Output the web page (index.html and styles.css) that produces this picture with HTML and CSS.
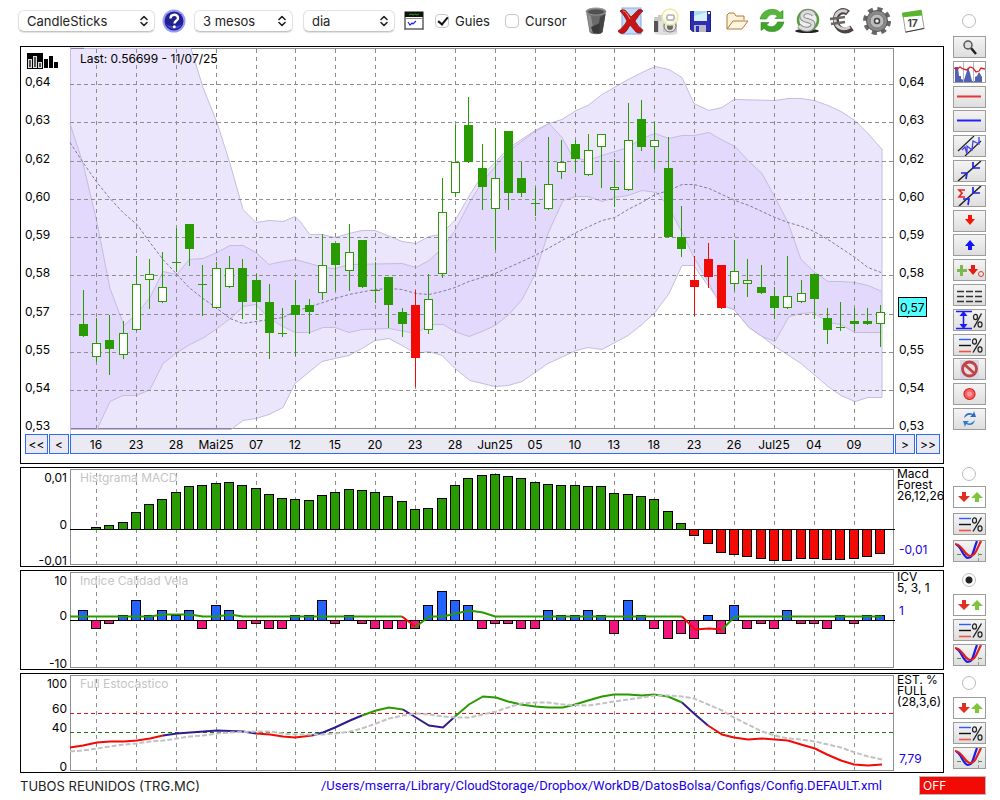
FILE: index.html
```
<!DOCTYPE html>
<html lang="ca">
<head>
    <meta charset="UTF-8">
    <meta name="viewport" content="width=device-width, initial-scale=1.0">
    <title>TUBOS REUNIDOS (TRG.MC)</title>
    <link rel="stylesheet" href="styles.css">
</head>
<body>
    <!-- icons used more than once -->
    <svg class="symbols" width="0" height="0">
        <symbol id="chevrons" viewBox="0 0 8 12">
            <path d="M1 4.5 L4 1.5 L7 4.5 M1 7.5 L4 10.5 L7 7.5" fill="none" stroke="#222" stroke-width="1.6" stroke-linecap="round" stroke-linejoin="round"/>
        </symbol>
        <symbol id="updown" viewBox="0 0 31 20">
            <path d="M8 5h4v4h4l-6 6l-6 -6h4z" fill="#e03024"/>
            <path d="M21 15h4v-4h4l-6 -6l-6 6h4z" fill="#7cc63c"/>
        </symbol>
        <symbol id="percent" viewBox="0 0 31 20">
            <path d="M5 4.5h12" stroke="#2c5cff" stroke-width="1.4"/>
            <path d="M5 10.5h12" stroke="#111" stroke-width="1.4"/>
            <path d="M5 16.5h12" stroke="#f25544" stroke-width="1.6"/>
            <path d="M19 17.5L27.500 3.500" stroke="#222" stroke-width="1.4"/>
            <ellipse cx="20.5" cy="6.5" rx="2" ry="2.6" fill="none" stroke="#222" stroke-width="1.2"/>
            <ellipse cx="26" cy="14.5" rx="2" ry="2.6" fill="none" stroke="#222" stroke-width="1.2"/>
        </symbol>
        <symbol id="cross" viewBox="0 0 31 20">
            <path d="M3 13.5h27" stroke="#4d9440" stroke-dasharray="4 3"/>
            <path d="M24.500 12v8" stroke="#999" stroke-dasharray="3 2"/>
            <path d="M2 4C7 4 9 17 14 17S19 10 23 0" fill="none" stroke="#1a1aee" stroke-width="2.2"/>
            <path d="M1 3C8 3 11 15 16 15S22 10 27 0" fill="none" stroke="#e0201c" stroke-width="2.2"/>
        </symbol>
    </svg>

    <div class="row">
        <div class="main">
            <div class="toolbar">
                <span class="select select-type">
                    <select aria-label="Tipus"><option>CandleSticks</option></select>
                    <svg width="8" height="12"><use href="#chevrons"/></svg>
                </span>
                <button class="icon help" title="Ajuda">
                    <svg width="24" height="24" viewBox="0 0 24 24">
                        <circle cx="12" cy="12" r="11.500" fill="#9a9cf4"/>
                        <circle cx="12" cy="12" r="9.500" fill="#20208f"/>
                        <path d="M4 15a9 9 0 0 0 16 0c-4 3 -12 3 -16 0z" fill="#4747dd"/>
                        <path d="M8.500 9.500c0 -5 7.500 -5 7.500 -.5c0 3 -3.500 2.500 -3.500 5.500" fill="none" stroke="#fff" stroke-width="2.4"/>
                        <circle cx="12.300" cy="17.800" r="1.500" fill="#fff"/>
                    </svg>
                </button>
                <span class="select select-range">
                    <select aria-label="Periode"><option>3 mesos</option></select>
                    <svg width="8" height="12"><use href="#chevrons"/></svg>
                </span>
                <span class="select select-unit">
                    <select aria-label="Unitat"><option>dia</option></select>
                    <svg width="8" height="12"><use href="#chevrons"/></svg>
                </span>
                <button class="icon check-chart" title="Indicadors">
                    <svg width="20" height="20" viewBox="0 0 20 20">
                        <rect x="1" y="1" width="18" height="17" fill="#fff" stroke="#111"/>
                        <rect x="1" y="1" width="18" height="5" fill="#111"/>
                        <path d="M5 4l2 -1l2 1l2 -1l2 1l2 -1" fill="none" stroke="#2c9c1c"/>
                        <path d="M0 7.500h20M0 18.500h20" stroke="#888"/>
                        <path d="M4 11l2 3l2 -2l1 1l3 -3" fill="none" stroke="#22e" stroke-width="1.2"/>
                    </svg>
                </button>
                <label class="tick"><input type="checkbox" checked>Guies</label>
                <label class="tick"><input type="checkbox">Cursor</label>

                <div class="actions">
                    <button class="icon" title="Paperera">
                        <svg width="26" height="28" viewBox="0 0 26 28">
                            <path d="M3 4L6.500 25c2 3 11 3 13 0L23 4z" fill="#6a6a6a"/>
                            <path d="M4 7l3 17c1 1 2 2 4 2L8 9z" fill="#8f8f8f"/>
                            <path d="M17 10l-3 17c3 0 5 -1 5.500 -2l3 -18z" fill="#444"/>
                            <path d="M8 20l9 -4l-1 10h-6z" fill="#3a3a3a"/>
                            <ellipse cx="13" cy="4.500" rx="10" ry="3.500" fill="#7c7c7c" stroke="#999"/>
                            <ellipse cx="13" cy="5" rx="8" ry="2.500" fill="#505050"/>
                        </svg>
                    </button>
                    <button class="icon" title="Esborrar">
                        <svg width="26" height="28" viewBox="0 0 26 28">
                            <rect x="4" y="1" width="19" height="26" fill="#c3dafa" stroke="#87abe4"/>
                            <path d="M2 4c3 -2 5 -1 6 0l5 6l7 -7c2 -1 4 0 5 1c-3 2 -5 6 -8 10c3 5 5 7 8 9c-1 3 -4 4 -7 2l-6 -7c-2 4 -4 7 -6 8c-3 1 -5 0 -6 -2c3 -2 7 -6 9 -10c-2 -4 -4 -7 -7 -10z" fill="#c81414" stroke="#7f0909" stroke-width=".7"/>
                            <path d="M5 4c2 0 4 2 7 8" fill="none" stroke="#f69a90"/>
                        </svg>
                    </button>
                    <button class="icon" title="Captura">
                        <svg width="28" height="28" viewBox="0 0 28 28">
                            <ellipse cx="14" cy="26" rx="12" ry="2" fill="#ddd"/>
                            <path d="M2 10h4V8h5v2h14v15H2z" fill="#c9c9c9"/>
                            <path d="M2 14h4v11H2z" fill="#555"/>
                            <path d="M7 14h4v11H7z" fill="#e2e2e2"/>
                            <circle cx="18" cy="19" r="6" fill="#e4e4e4" stroke="#777"/>
                            <circle cx="18" cy="20" r="3" fill="#6a6a6a"/>
                            <circle cx="18" cy="10" r="8" fill="#fffff0" fill-opacity=".8" stroke="#ece9a4" stroke-width="1.500"/>
                            <rect x="15" y="8" width="7" height="5" rx="1" fill="#fff" stroke="#888"/>
                        </svg>
                    </button>
                    <button class="icon" title="Desar">
                        <svg width="24" height="28" viewBox="0 0 24 28">
                            <path d="M1.500 4.500h20v20H4l-2.500 -2z" fill="#2d2db8" stroke="#20207f"/>
                            <rect x="5" y="4" width="13" height="10" fill="#a9dcf8"/>
                            <path d="M5 9l13 -4v9H5z" fill="#d7f0fd"/>
                            <rect x="5" y="18" width="12" height="7" fill="#b9b9c4"/>
                            <rect x="7" y="19" width="3" height="6" fill="#2d2db8"/>
                            <rect x="19" y="5" width="2" height="2" fill="#fff"/>
                        </svg>
                    </button>
                    <button class="icon" title="Obrir">
                        <svg width="26" height="28" viewBox="0 0 26 28">
                            <path d="M3 22V8l2 -2h5l2 3h8v4" fill="#fdf3dc" stroke="#b57a35"/>
                            <path d="M3 22l6 -8h15l-6 8z" fill="#fff6e3" stroke="#b57a35"/>
                        </svg>
                    </button>
                    <button class="icon" title="Actualitzar">
                        <svg width="26" height="28" viewBox="0 0 26 28">
                            <path d="M1 12C3 5 8 2 14 2.500c3 0 5 1 7 3l3 -2v8h-8l2.500 -2.500c-4 -3 -9 -2 -11 3z" fill="#55b83a" stroke="#2c8a1c" stroke-width=".6"/>
                            <path d="M25 15c-2 7 -7 10 -13 9.500c-3 0 -5 -1 -7 -3l-3 2v-8h8l-2.500 2.500c4 3 9 2 11 -3z" fill="#3fa52b" stroke="#2c8a1c" stroke-width=".6"/>
                        </svg>
                    </button>
                    <button class="icon" title="Dòlar">
                        <svg width="28" height="28" viewBox="0 0 28 28">
                            <ellipse cx="14" cy="24" rx="12" ry="2" fill="#222"/>
                            <circle cx="15" cy="13" r="10" fill="#eee" stroke="#5c9a44" stroke-width="2.500"/>
                            <path d="M21 8c-3 -5 -13 -4 -12 2c0 5 12 2 11 8c-1 5 -9 6 -14 1" fill="none" stroke="#8b8b8b" stroke-width="5"/>
                            <path d="M21 8c-3 -5 -13 -4 -12 2c0 5 12 2 11 8c-1 5 -9 6 -14 1" fill="none" stroke="#dedede" stroke-width="3"/>
                        </svg>
                    </button>
                    <button class="icon" title="Euro">
                        <svg width="28" height="28" viewBox="0 0 28 28">
                            <path d="M20 6C15 2 7 5 8 14c1 9 9 12 16 7" fill="none" stroke="#4c4242" stroke-width="6"/>
                            <path d="M19 5C14 2 7 5 7 13c1 8 8 11 15 7" fill="none" stroke="#cfcfcf" stroke-width="3"/>
                            <path d="M2 12l15 -2M3 17l14 -2" stroke="#6c6464" stroke-width="2.600"/>
                        </svg>
                    </button>
                    <button class="icon" title="Configuració">
                        <svg width="30" height="30" viewBox="0 0 30 30">
                            <circle cx="15" cy="15" r="11" fill="none" stroke="#666" stroke-width="6" stroke-dasharray="4.600 4.040"/>
                            <circle cx="15" cy="15" r="10.500" fill="#8a8a8a" stroke="#555"/>
                            <circle cx="15" cy="15" r="7" fill="#bcbcbc" stroke="#777"/>
                            <circle cx="15" cy="15" r="2.500" fill="#eee" stroke="#444" stroke-width="1.500"/>
                        </svg>
                    </button>
                    <button class="icon" title="Calendari">
                        <svg width="26" height="28" viewBox="0 0 28 28">
                            <path d="M3 6l20 -3l3 19l-20 4z" fill="#fff" stroke="#999"/>
                            <path d="M2 5l21 -3l1 6l-21 2z" fill="#58b52c"/>
                            <path d="M6 26l20 -4" stroke="#333"/>
                            <text x="8" y="20" class="calendar-day">17</text>
                        </svg>
                    </button>
                </div>
            </div>

            <div class="panel">
                <svg class="chart chart-price" id="price"></svg>
                <div class="dates">
                    <button class="first">&lt;&lt;</button>
                    <button class="prev">&lt;</button>
                    <svg class="date-strip" id="dates"></svg>
                    <button class="next">&gt;</button>
                    <button class="last">&gt;&gt;</button>
                </div>
            </div>
        </div>

        <div class="tools tools-draw">
            <input type="radio" name="panel" aria-label="Preu">
            <div class="tool-list">
                <button title="Zoom"><svg viewBox="0 0 31 20">
                    <path d="M17 11l5 6" stroke="#222" stroke-width="2.500"/>
                    <circle cx="14" cy="8" r="4" fill="#ddd" stroke="#555" stroke-width="1.500"/>
                </svg></button>
                <button title="Volum"><svg viewBox="0 0 31 20">
                    <path d="M0 0h31v20H0z" fill="#fff"/>
                    <path d="M1 20V5h3l1 9h2v3l3 1l2 -6l2 -7l2 6l2 8h3v-4l2 -1l2 -4l3 5v5z" fill="#5460b0"/>
                    <path d="M9.500 0v20M19.500 0v20" stroke="#b4b8dc"/>
                    <path d="M0 6l3 1l3 -2l3 2l4 1l3 -3l3 1l3 4l3 -1l2 -3l4 1" fill="none" stroke="#e01c1c" stroke-width="1.300"/>
                </svg></button>
                <button title="Resistència"><svg viewBox="0 0 31 20"><path d="M3 9.500h24" stroke="#e8343c" stroke-width="2"/></svg></button>
                <button title="Suport"><svg viewBox="0 0 31 20"><path d="M3 9.500h24" stroke="#2424f4" stroke-width="2"/></svg></button>
                <button title="Canal"><svg viewBox="0 0 31 20">
                    <path d="M4 15L20 0M11 20L27 5" stroke="#222" stroke-width="1.200"/>
                    <path d="M8 14l3 -3l2 7l0 -8l5 4l1 -9l6 3l0 -7" fill="none" stroke="#4040f0" stroke-width="1.300"/>
                </svg></button>
                <button title="Línia"><svg viewBox="0 0 31 20">
                    <path d="M4 20L27 0" stroke="#222" stroke-width="1.500"/>
                    <path d="M7 12l6 0l-1 6M19 1l0 6l7 0" fill="none" stroke="#2222e0" stroke-width="1.700"/>
                </svg></button>
                <button title="Regressió"><svg viewBox="0 0 31 20">
                    <path d="M5 20L27 0" stroke="#222" stroke-width="1.500"/>
                    <path d="M9 13l6 0l-1 6M19 1l0 6l7 0" fill="none" stroke="#2222e0" stroke-width="1.700"/>
                    <path d="M11 4H5l3 3l-3 4h6" fill="none" stroke="#e82424" stroke-width="1.700"/>
                </svg></button>
                <button title="Venda"><svg viewBox="0 0 31 20"><path d="M14 4h4v4h3l-5 6l-5 -6h3z" fill="#fb1404"/></svg></button>
                <button title="Compra"><svg viewBox="0 0 31 20"><path d="M14 15h4v-4h3l-5 -6l-5 6h3z" fill="#1414fa"/></svg></button>
                <button title="Senyals"><svg viewBox="0 0 31 20">
                    <path d="M6 5h3v4h4v3H9v4H6v-4H3V9h3z" fill="#7cb850"/>
                    <path d="M17 5h4v4h3l-5 6l-5 -6h3z" fill="#e41c14"/>
                    <circle cx="27" cy="14" r="2.500" fill="none" stroke="#e43c34"/>
                </svg></button>
                <button title="Nivells"><svg viewBox="0 0 31 20"><path d="M3 6.500h25M3 11.500h25M3 16.500h25" stroke="#333" stroke-width="1.500" stroke-dasharray="7 2"/></svg></button>
                <button title="Rang"><svg viewBox="0 0 31 20">
                    <path d="M2 1.500h16M2 18.500h16M9.500 4v12" stroke="#1c1cf0" stroke-width="1.500"/>
                    <path d="M9.500 1l4 5h-8zM9.500 19l4 -5h-8z" fill="#1c1cf0"/>
                    <path d="M20 17.500L27.500 3.500" stroke="#222" stroke-width="1.400"/>
                    <ellipse cx="21.500" cy="7" rx="2" ry="2.600" fill="none" stroke="#222" stroke-width="1.200"/>
                    <ellipse cx="26" cy="14.500" rx="2" ry="2.600" fill="none" stroke="#222" stroke-width="1.200"/>
                </svg></button>
                <button title="Percentatge"><svg><use href="#percent"/></svg></button>
                <button title="Prohibit"><svg viewBox="0 0 31 20">
                    <rect x="6" y="1" width="19" height="19" fill="#d4d8ea"/>
                    <circle cx="15.500" cy="10" r="7" fill="#e6dce2" stroke="#bf4444" stroke-width="2.800"/>
                    <path d="M10.500 5.500l10 9" stroke="#bf4444" stroke-width="2.800"/>
                </svg></button>
                <button title="Gravar"><svg viewBox="0 0 31 20">
                    <circle cx="15.500" cy="10" r="5.500" fill="#f26464" stroke="#e41c1c" stroke-width="1.200"/>
                    <circle cx="15.500" cy="10" r="2.500" fill="#fa9c9c"/>
                </svg></button>
                <button title="Recarregar"><svg viewBox="0 0 31 20">
                    <path d="M10 9c1 -5 5 -6 9 -4l1 -3l2 6h-6l2 -2c-3 -1 -5 0 -8 3z" fill="#2c6cc8"/>
                    <path d="M21 11c-1 5 -5 6 -9 4l-1 3l-2 -6h6l-2 2c3 1 5 0 8 -3z" fill="#2c7cd0"/>
                </svg></button>
            </div>
        </div>
    </div>

    <div class="row">
        <div class="panel"><svg class="chart" id="macd"></svg></div>
        <div class="tools tools-macd">
            <input type="radio" name="panel" aria-label="MACD">
            <button class="plain" title="Ordre"><svg><use href="#updown"/></svg></button>
            <button title="Percentatge"><svg><use href="#percent"/></svg></button>
            <button title="Creuament"><svg><use href="#cross"/></svg></button>
        </div>
    </div>

    <div class="row">
        <div class="panel"><svg class="chart" id="icv"></svg></div>
        <div class="tools">
            <input type="radio" name="panel" aria-label="ICV" checked>
            <button class="plain" title="Ordre"><svg><use href="#updown"/></svg></button>
            <button title="Percentatge"><svg><use href="#percent"/></svg></button>
            <button title="Creuament"><svg><use href="#cross"/></svg></button>
        </div>
    </div>

    <div class="row">
        <div class="panel"><svg class="chart" id="stoch"></svg></div>
        <div class="tools">
            <input type="radio" name="panel" aria-label="Estocastico">
            <button class="plain" title="Ordre"><svg><use href="#updown"/></svg></button>
            <button title="Percentatge"><svg><use href="#percent"/></svg></button>
            <button title="Creuament"><svg><use href="#cross"/></svg></button>
        </div>
    </div>

    <footer>
        <span>TUBOS REUNIDOS (TRG.MC)</span>
        <span class="path">/Users/mserra/Library/CloudStorage/Dropbox/WorkDB/DatosBolsa/Configs/Config.DEFAULT.xml</span>
        <button class="off">OFF</button>
    </footer>

    <script src="charts.js"></script>
</body>
</html>
```
FILE: styles.css
```
* {
    box-sizing: border-box;
}

body {
    margin: 0;
    background: #fff;
    color: #000;
    font-family: Inter, "Liberation Sans", sans-serif;
    font-size: 13px;
}

button, select {
    font: inherit;
    color: inherit;
    padding: 0;
}

.symbols {
    display: block;
}

/* every row: chart panel + its column of tools */
.row {
    display: flex;
    gap: 9px;
    padding: 0 14px 0 20px;
    margin-bottom: 3px;
}

.main, .panel {
    flex: 1;
    min-width: 0;
}

.panel {
    border: 1px solid #000;
}

/* toolbar */
.toolbar {
    display: flex;
    align-items: center;
    height: 46px;
    margin-left: -2px;
    padding-bottom: 4px;
}

.select {
    position: relative;
    height: 22px;
}

.select select {
    appearance: none;
    width: 100%;
    height: 22px;
    padding-left: 8px;
    border: 1px solid #e2e2e2;
    border-bottom-color: #c4c4c4;
    border-radius: 6px;
    background: #fff;
    box-shadow: 0 1px 1px rgba(0, 0, 0, 0.12);
    color: #222;
}

.select svg {
    position: absolute;
    right: 7px;
    top: 5px;
    pointer-events: none;
}

.select-type {
    width: 137px;
}

.select-range {
    width: 99px;
    margin-right: 10px;
}

.select-unit {
    width: 92px;
}

.icon {
    display: flex;
    justify-content: center;
    border: none;
    background: none;
}

.help {
    margin: 0 8px 0 7px;
}

.check-chart {
    margin: 0 11px 0 9px;
}

.tick {
    display: flex;
    align-items: center;
    gap: 6px;
    margin-right: 15px;
    color: #222;
}

.tick input {
    appearance: none;
    width: 14px;
    height: 14px;
    margin: 0;
    border: 1px solid #c8c8c8;
    border-radius: 4px;
    background: #fff;
}

.tick input:checked::after {
    content: "";
    display: block;
    width: 4px;
    height: 8px;
    margin: 0 0 0 4px;
    border: solid #111;
    border-width: 0 2px 2px 0;
    transform: rotate(40deg);
}

.actions {
    display: flex;
    flex: 1;
    align-items: center;
    justify-content: space-between;
    max-width: 345px;
}

.actions .icon {
    width: 28px;
}

.actions svg {
    flex: none;
}

.calendar-day {
    font-size: 11px;
    font-weight: bold;
    fill: #444;
}

/* charts */
.chart {
    display: block;
    width: 100%;
    height: 98px;
    font-size: 12px;
}

.chart-price {
    height: 387px;
}

.dates {
    display: flex;
    gap: 1px;
    height: 29px;
    padding: 0 3px 9px 4px;
    font-size: 12px;
}

.dates button, .date-strip {
    height: 20px;
    border: 1px solid #2f6bf0;
    border-radius: 0;
    background: #ebeaf2;
}

.date-strip {
    flex: 1;
    min-width: 0;
}

.first, .last {
    width: 23px;
}

.prev, .next {
    width: 20px;
}

.last {
    width: 24px;
}

.title {
    fill: #c4c4c4;
}

.value {
    fill: #1a00e6;
}

/* tools */
.tools {
    display: flex;
    flex-direction: column;
    align-items: center;
    gap: 3px;
    width: 33px;
    padding-top: 3px;
}

.tools-macd {
    gap: 5px;
    padding-top: 0;
}

.tools-draw {
    gap: 8px;
    padding-top: 14px;
}

.tool-list {
    display: flex;
    flex-direction: column;
    justify-content: space-between;
    height: 394px;
}

.tools button {
    display: block;
    width: 33px;
    height: 22px;
    border: 1px solid #9c9c9c;
    border-radius: 0;
    background: linear-gradient(#f4f4f4, #dedede);
}

.tools .plain {
    background: #fff;
}

.tools button svg {
    display: block;
    width: 31px;
    height: 20px;
}

.tools input {
    appearance: none;
    flex: none;
    width: 14px;
    height: 14px;
    margin: 0 2px 0 0;
    border: 1px solid #bbb;
    border-radius: 50%;
    background: #fff;
}

.tools:not(.tools-draw):not(.tools-macd) input {
    margin-bottom: 4px;
}

.tools input:checked {
    background: radial-gradient(#222 3px, #fff 4px);
}

footer {
    display: flex;
    align-items: center;
    padding: 0 14px 0 20px;
    color: #222;
}

.path {
    flex: 1;
    margin-right: 37px;
    font-family: Roboto, "Liberation Sans", sans-serif;
    text-align: right;
    color: #1a00e6;
}

.off {
    width: 67px;
    height: 19px;
    padding-left: 3px;
    border: 1px solid #b9b9b9;
    background: #f20a05;
    color: #fff;
    font-size: 12px;
    text-align: left;
}
```
FILE: charts.js
```
const GREEN = "#279b00";
const RED = "#f20a05";
const GRID = "#8e8e8e";

// y values are window rows at 100%; x values are columns of an 823px wide plot starting at 70
const LEFT = 70, PLOT = 823, EDGE = 21;

// high, body top, body bottom, low, kind (g filled, w hollow, r red, d doji)
const candles = [
    [290,324,336,337,"g"], [318,343,357,362,"w"], [315,340,349,375,"g"], [321,333,355,359,"w"],
    [256,284,330,331,"w"], [259,274,280,309,"w"], [252,287,302,303,"w"], [228,262,262,272,"d"],
    [224,224,249,266,"g"], [265,284,284,316,"d"], [262,268,308,309,"w"], [256,268,287,288,"w"],
    [259,268,302,319,"g"], [274,280,302,320,"g"], [284,302,333,359,"g"], [308,333,333,337,"d"],
    [280,305,315,356,"g"], [299,305,312,334,"g"], [234,265,293,300,"w"], [243,243,265,291,"g"],
    [224,252,271,291,"w"], [240,240,287,288,"g"], [262,290,290,303,"d"], [277,277,305,328,"g"],
    [308,312,324,337,"g"], [290,305,358,387,"r"], [274,299,330,334,"w"], [178,212,274,278,"w"],
    [125,162,193,197,"w"], [97,125,162,163,"g"], [144,168,187,210,"g"], [128,178,209,250,"w"],
    [131,131,193,210,"g"], [162,178,193,197,"g"], [187,203,203,216,"d"], [137,184,209,210,"w"],
    [140,162,172,179,"w"], [140,144,159,173,"g"], [134,150,175,176,"w"], [134,134,147,188,"w"],
    [159,187,190,207,"w"], [103,140,190,191,"w"], [100,119,147,151,"g"], [122,140,147,169,"w"],
    [137,168,237,238,"g"], [206,237,249,257,"g"], [256,280,287,316,"r"], [243,259,277,288,"r"],
    [265,265,308,309,"r"], [240,271,284,291,"w"], [259,280,284,297,"w"], [265,287,293,294,"g"],
    [287,296,308,319,"g"], [256,296,308,309,"w"], [280,293,302,303,"w"], [274,274,299,319,"g"],
    [308,318,330,344,"g"], [302,327,327,331,"d"], [308,321,324,331,"g"], [308,321,324,325,"g"],
    [305,312,324,347,"w"]
];

const wideTop = "84,48 191,48 203,87 217,122 230,163 243,209 256,222 269,220 283,221 295,216 300,221 310,234 322,234 335,237 349,233 362,230 375,230 390,236 402,241 416,243 429,236 440,234 455,220 470,194 482,175 495,162 508,148 535,130 549,123 562,119 576,110 588,105 602,94 628,79 642,72 655,66 669,69 682,77 694,103 709,110 722,107 734,99 775,100 788,98 801,98 814,100 828,105 841,111 855,120 868,133 882,149";
const wideBottom = "70,429 231,429 243,420 256,418 269,414 283,407 295,383 300,379 322,361 335,358 349,355 362,348 375,340 389,338 402,345 416,353 429,351 442,355 455,368 470,380 495,386 508,385 522,381 535,372 548,363 576,350 588,347 602,349 628,335 642,324 655,312 669,293 682,265 694,265 700,274 717,297 722,305 734,309 749,327 762,336 775,346 801,363 814,374 828,386 841,395 855,401 868,397 882,397";
const narrowTop = "70,123 83,163 97,222 110,288 124,325 137,313 150,297 163,271 177,274 189,259 203,258 217,252 230,245 243,245 256,252 269,264 283,261 295,259 310,263 323,267 335,268 349,264 402,263 416,267 429,260 442,248 455,230 470,201 482,182 495,166 508,151 535,131 549,123 562,137 573,157 588,160 602,155 615,151 628,147 642,138 655,133 669,138 682,135 694,135 709,132 721,139 735,146 749,161 762,173 775,197 788,222 801,259 814,271 828,281 841,281 855,282 868,285 882,291";
const narrowBottom = "70,429 97,429 110,401 123,395 137,395 150,389 163,363 177,352 190,344 204,337 217,328 233,316 243,306 256,304 269,318 283,326 295,332 310,332 323,327 335,327 349,332 362,329 389,328 416,333 429,324 443,324 455,331 469,336 482,331 495,325 509,314 522,299 535,274 548,233 563,200 576,196 588,196 602,201 615,197 628,195 642,190 657,192 669,207 682,232 694,257 709,283 717,298 722,305 734,309 749,327 762,336 775,341 789,316 801,313 814,312 828,322 841,324 855,332 882,332";
const middle = "70,142 83,162 97,182 110,198 124,213 137,224 150,242 163,259 177,274 189,287 203,298 217,308 230,318 243,323 256,321 269,319 283,317 295,311 323,302 335,298 349,294 375,289 389,288 402,289 416,293 429,294 442,291 455,287 469,281 495,273 522,261 535,255 548,248 562,240 576,232 602,220 615,217 628,209 642,202 655,194 669,190 682,184 694,184 709,188 735,200 749,205 775,217 788,222 802,226 814,231 828,239 855,257 868,267 881,272";

const macd = [0,2,4,7,17,25,30,37,43,44,46,47,44,41,35,31,30,29,34,37,40,39,37,33,28,20,21,31,44,51,54,55,53,51,47,45,44,44,43,43,36,35,33,30,18,6,-6,-14,-23,-25,-27,-29,-31,-31,-29,-29,-30,-30,-29,-27,-24];

const icv = [10,-8,-3,5,20,5,10,5,10,-8,15,10,-8,-3,-8,-8,5,5,20,-3,5,-3,-8,-8,-8,-8,15,29,20,15,-8,-3,-3,-8,-8,10,5,5,10,5,-13,20,5,-8,-18,-13,-18,5,-13,15,-8,-3,-8,10,-3,-3,-8,5,-3,5,5];

const icvLine = [
    [GREEN, "70,616 150,616 163,614 190,614 203,616 217,616 230,614 243,616 402,616"],
    [RED, "402,616 415,626"],
    [GREEN, "415,627 429,616 443,616 456,613 469,610 483,612 495,616 682,616"],
    [RED, "682,616 695,629 709,628 722,629"],
    [GREEN, "722,629 735,616 882,616"]
];

const PURPLE = "#301c8c";
const stochLine = [
    [RED, "70,747 83,745 97,742 110,741 124,741 137,740 150,738 163,735"],
    [PURPLE, "163,735 177,733 190,732 217,730 243,731 256,733"],
    [RED, "256,733 270,734 283,736 295,737 312,735"],
    [PURPLE, "312,735 323,732 335,727 350,720 362,715"],
    [GREEN, "362,715 376,710 389,707 403,709"],
    [PURPLE, "403,709 416,717 429,725 443,727 455,716"],
    [GREEN, "455,716 469,704 483,696 496,697 508,701 521,704 535,706 548,707 563,707 575,704 588,700 602,696 614,694 628,694 642,695 654,694 668,696 682,702"],
    [PURPLE, "682,702 694,713 708,725"],
    [RED, "708,725 722,734 734,737 748,739 762,738 788,740 801,744 815,748 827,754 841,760 854,764 868,765 882,764"]
];
const stochSlow = "70,751 83,750 97,748 110,746 124,744 137,743 150,741 163,740 177,738 190,736 203,735 217,733 230,732 256,731 270,731 283,733 295,734 323,734 335,733 350,731 362,728 376,723 389,718 403,715 416,713 429,714 443,716 456,717 469,717 496,711 508,707 521,703 535,702 548,702 563,704 588,705 602,703 614,701 628,699 642,697 655,695 668,695 682,696 694,698 708,704 722,710 734,717 748,724 762,731 775,735 788,738 801,739 815,741 828,744 841,747 855,752 868,756 882,759";

const dayLabels = ["16","23","28","Mai25","07","12","15","20","23","28","Jun25","05","10","13","18","23","26","Jul25","04","09"];
const priceLabels = ["0,64","0,63","0,62","0,60","0,59","0,58","0,57","0,55","0,54","0,53"];
const priceRows = [84,122,161,199,237,275,314,352,390,428];

let scale = 1;

function sx(px) {
    return LEFT + (px - LEFT) * scale;
}

// pixel column of candle i
function col(i) {
    return Math.floor(sx(83.17 + i * 13.295));
}

function line(x1, y1, x2, y2, attrs) {
    return `<line x1="${x1}" y1="${y1}" x2="${x2}" y2="${y2}" ${attrs}/>`;
}

function rect(x, y, w, h, attrs) {
    return `<rect x="${x}" y="${y}" width="${w}" height="${h}" ${attrs}/>`;
}

function text(x, y, str, attrs = "") {
    return `<text x="${x}" y="${y}" ${attrs}>${str}</text>`;
}

function scaled(points) {
    return points.split(" ").map(p => {
        const [x, y] = p.split(",").map(Number);
        return `${sx(x)},${y + 0.5}`;
    });
}

function polyline(points, attrs) {
    return `<polyline points="${scaled(points).join(" ")}" fill="none" ${attrs}/>`;
}

function area(top, bottom, attrs) {
    const pts = scaled(top).concat(scaled(bottom).reverse());
    return `<polygon points="${pts.join(" ")}" ${attrs}/>`;
}

function draw(id, top, content) {
    const svg = document.getElementById(id);
    const w = svg.clientWidth, h = svg.clientHeight;
    svg.setAttribute("viewBox", `${EDGE} ${top} ${w} ${h}`);
    svg.innerHTML = content;
}

function verticals(y1, y2) {
    let out = "";
    for (let i = 1; i < candles.length; i += 3) {
        out += line(col(i) + 0.5, y1, col(i) + 0.5, y2, `stroke="${GRID}" stroke-dasharray="4 4"`);
    }
    return out;
}

function frame(y1, y2) {
    const right = Math.floor(sx(LEFT + PLOT));
    return rect(LEFT + 0.5, y1 + 0.5, right - LEFT, y2 - y1, `fill="none" stroke="${GRID}"`);
}

function bars(values, zero, up, down) {
    return values.map((v, i) => {
        if (v === 0) return "";
        const y = v > 0 ? zero - v : zero;
        return rect(col(i) - 4.5, y + 0.5, 9, Math.abs(v), `fill="${v > 0 ? up : down}" stroke="#000"`);
    }).join("");
}

function drawPrice() {
    const right = Math.floor(sx(LEFT + PLOT));
    let out = rect(LEFT + 0.5, 48.5, right - LEFT, 380, `fill="none" stroke="${GRID}"`);
    out += area("70,46 84,46 " + wideTop, wideBottom, `fill="#6a3df0" fill-opacity="0.13"`);
    out += area(narrowTop, narrowBottom, `fill="#6a3df0" fill-opacity="0.07"`);
    const edge = `stroke="#c3bde0"`;
    out += polyline(wideTop, edge) + polyline(wideBottom, edge);
    out += polyline(narrowTop, edge) + polyline(narrowBottom, edge);
    out += line(sx(882), 149, sx(882), 397, edge) + line(70.5, 47, 70.5, 434, edge);

    out += verticals(49, 430);
    priceRows.slice(0, 9).forEach(y => {
        out += line(70, y + 0.5, right + 2, y + 0.5, `stroke="${GRID}" stroke-dasharray="4 3"`);
    });
    out += polyline(middle, `stroke="#857a9c" stroke-dasharray="3 2"`);

    candles.forEach(([hi, top, bottom, lo, kind], i) => {
        const x = col(i);
        const color = kind === "r" ? RED : GREEN;
        out += line(x + 0.5, hi, x + 0.5, lo, `stroke="${color}"`);
        if (kind === "d") {
            out += line(x - 4, top + 0.5, x + 5, top + 0.5, `stroke="${color}"`);
        } else {
            out += rect(x - 3.5, top + 0.5, 8, bottom - top - 1, `stroke="${color}" fill="${kind === "w" ? "#fff" : color}"`);
        }
    });

    priceRows.forEach((y, i) => {
        out += text(25, y + 2, priceLabels[i]) + text(right + 6, y + 2, priceLabels[i]);
    });
    out += rect(right + 5.5, 297.5, 28, 19, `fill="#54ffff" stroke="#000"`) + text(right + 7, 312, "0,57");
    out += text(80, 63, "Last: 0.56699 - 11/07/25");

    // small bars logo
    out += rect(27, 53, 16, 16, "") + rect(28.5, 59.5, 3, 8, `fill="#555" stroke="#ddd"`);
    out += rect(33.5, 56.5, 3, 11, `fill="#555" stroke="#ddd"`) + rect(38.5, 62.5, 3, 5, `fill="#555" stroke="#ddd"`);
    out += rect(44, 59, 4, 9, "") + rect(49, 56, 4, 12, "") + rect(54, 62, 4, 6, "");
    draw("price", 47, out);

    const strip = document.getElementById("dates");
    strip.innerHTML = dayLabels.map((d, i) => text(col(1 + i * 3) - LEFT - 1, 14, d, `text-anchor="middle"`)).join("");
}

function drawMacd() {
    const right = Math.floor(sx(LEFT + PLOT));
    let out = frame(469, 564) + verticals(473, 566);
    out += text(80, 482, "Histgrama MACD", `class="title"`);
    out += bars(macd, 529, GREEN, RED);
    out += line(70, 529.5, right + 2, 529.5, `stroke="#000"`);
    out += text(67, 482, "0,01", `text-anchor="end"`) + text(67, 529, "0", `text-anchor="end"`) + text(67, 565, "-0,01", `text-anchor="end"`);
    out += text(right + 4, 478, "Macd") + text(right + 4, 489, "Forest") + text(right + 4, 500, "26,12,26");
    out += text(right + 6, 554, "-0,01", `class="value"`);
    draw("macd", 468, out);
}

function drawIcv() {
    const right = Math.floor(sx(LEFT + PLOT));
    let out = frame(572, 667) + verticals(576, 669);
    out += text(80, 585, "Indice Calidad Vela", `class="title"`);
    out += bars(icv, 620, "#2563ff", "#f0147c");
    out += line(70, 620.5, right + 2, 620.5, `stroke="#000"`);
    icvLine.forEach(([color, pts]) => out += polyline(pts, `stroke="${color}" stroke-width="2"`));
    out += text(67, 585, "10", `text-anchor="end"`) + text(67, 620, "0", `text-anchor="end"`) + text(67, 668, "-10", `text-anchor="end"`);
    out += text(right + 4, 581, "ICV") + text(right + 4, 592, "5, 3, 1");
    out += text(right + 6, 615, "1", `class="value"`);
    draw("icv", 571, out);
}

function drawStoch() {
    const right = Math.floor(sx(LEFT + PLOT));
    let out = frame(675, 770) + verticals(679, 772);
    out += text(80, 688, "Full Estocastico", `class="title"`);
    out += line(70, 713.5, right + 2, 713.5, `stroke="#d81c10" stroke-dasharray="4 3"`);
    out += line(70, 732.5, right + 2, 732.5, `stroke="#14780a" stroke-dasharray="4 3"`);
    stochLine.forEach(([color, pts]) => out += polyline(pts, `stroke="${color}" stroke-width="2"`));
    out += polyline(stochSlow, `stroke="#c2c2c2" stroke-width="2" stroke-dasharray="5 2"`);
    [["100", 688], ["60", 713], ["40", 732], ["0", 771]].forEach(([s, y]) => {
        out += text(67, y, s, `text-anchor="end"`);
    });
    out += text(right + 4, 684, "EST. %") + text(right + 4, 695, "FULL") + text(right + 4, 706, "(28,3,6)");
    out += text(right + 6, 763, "7,79", `class="value"`);
    draw("stoch", 674, out);
}

function drawAll() {
    scale = (document.getElementById("price").clientWidth - 99) / PLOT;
    drawPrice();
    drawMacd();
    drawIcv();
    drawStoch();
}

drawAll();
window.addEventListener("resize", drawAll);
```
